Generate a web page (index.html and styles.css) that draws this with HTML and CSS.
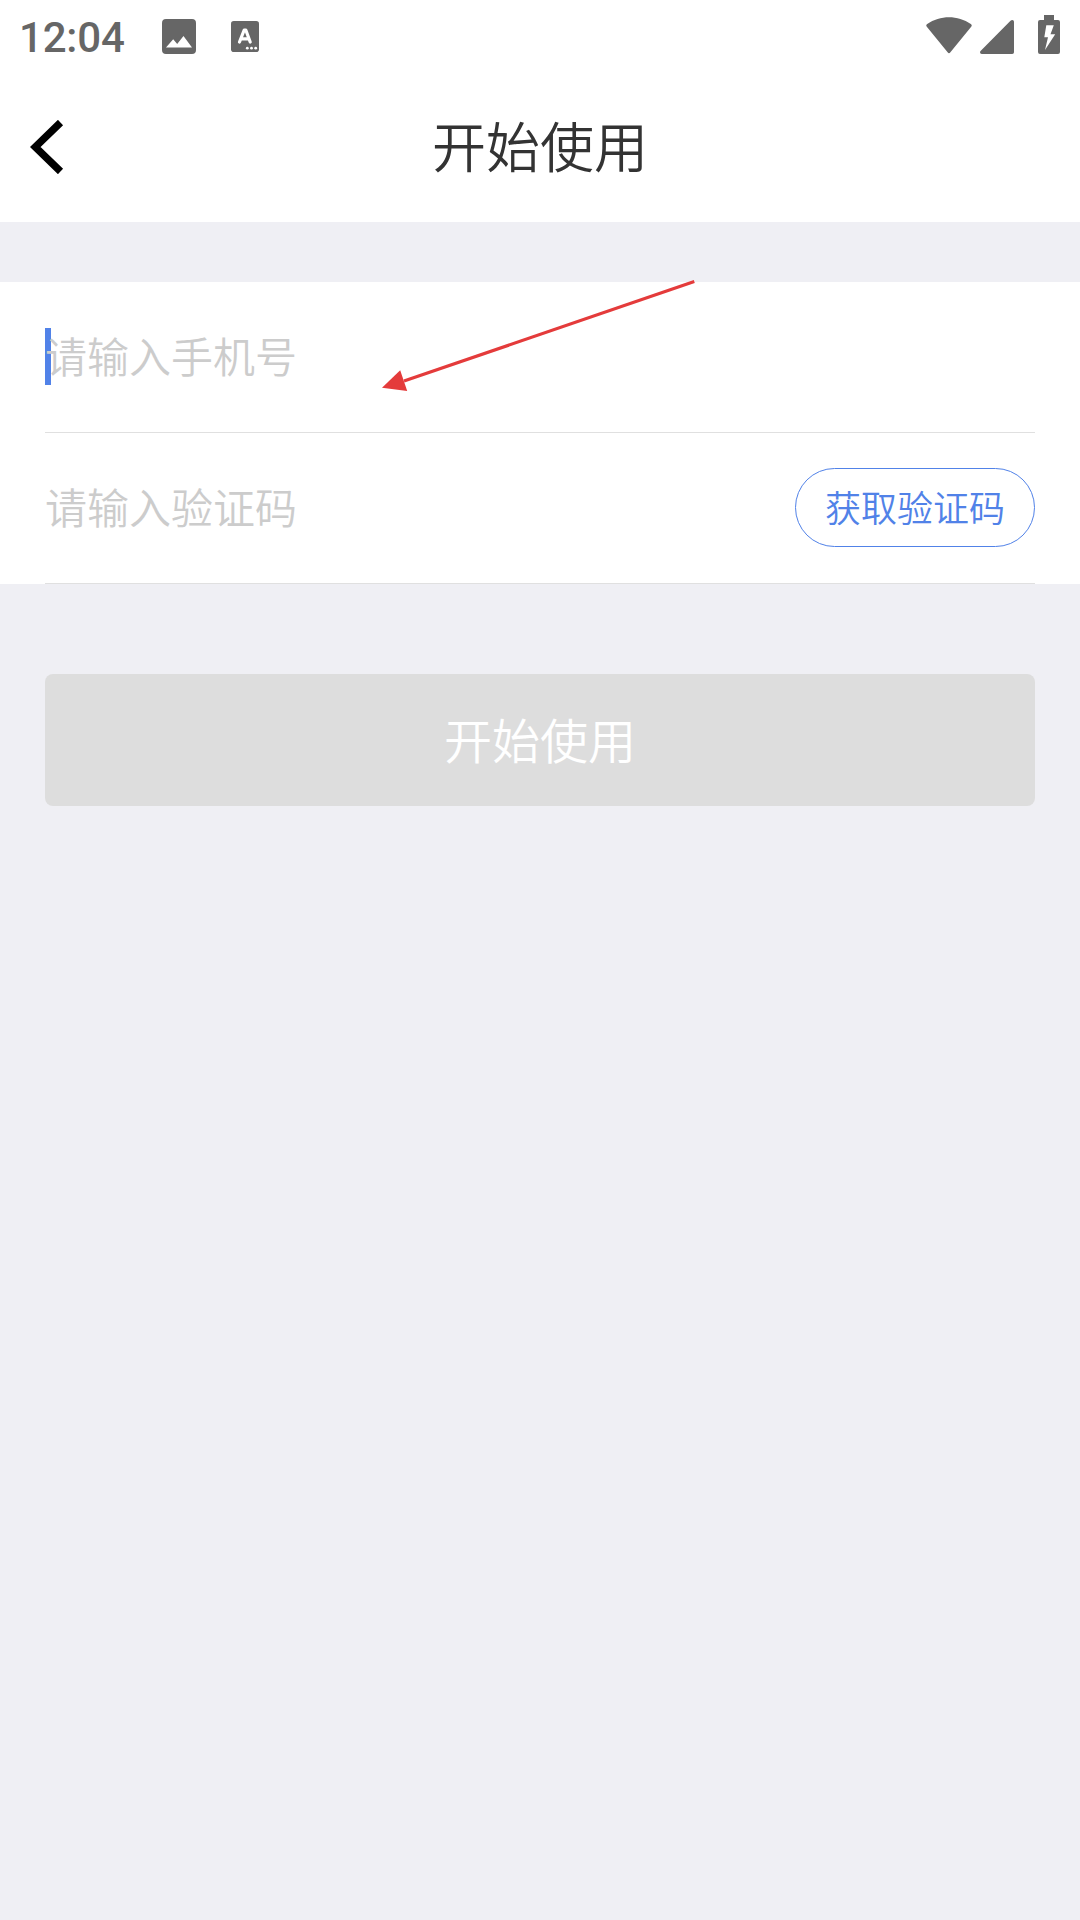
FILE: index.html
```html
<!DOCTYPE html>
<html lang="zh-CN">
<head>
<meta charset="utf-8">
<title>开始使用</title>
<link rel="stylesheet" href="styles.css">
</head>
<body>
<div class="status-bar">
  <span class="time">12:04</span>
  <svg class="icon-image" width="34" height="35" viewBox="0 0 34 35"><path fill="#666" fill-rule="evenodd" d="M4 0H30Q34 0 34 4V31Q34 35 30 35H4Q0 35 0 31V4Q0 0 4 0ZM4 28.5H30L21.500 17L15.200 25L11.200 20.300Z"/></svg>
  <svg class="icon-letter" width="28" height="31" viewBox="0 0 28 31"><rect width="28" height="31" rx="2.800" fill="#666"/><path d="M8.500 21L13.200 9H14.800L19.200 21M10 17.800H17.800" fill="none" stroke="#fff" stroke-width="3.200" stroke-linecap="round" stroke-linejoin="round"/><g fill="#fff"><circle cx="16.300" cy="27.200" r="1.400"/><circle cx="20.500" cy="27.200" r="1.400"/><circle cx="24.700" cy="27.200" r="1.400"/></g></svg>
  <div class="system-icons">
    <svg width="46" height="37" viewBox="0 0 46 37" fill="#666"><path d="M.8 9.800Q-.5 8.300 1.200 7.100C14-1.900 32-1.900 44.800 7.100Q46.500 8.300 45.200 9.800L24.400 35.300Q23 37 21.600 35.300Z"/></svg>
    <svg class="icon-signal" width="34" height="34" viewBox="0 0 34 34" fill="#666"><path d="M30.500 .8Q31.300 0 32.300 0Q34 0 34 1.800V32.200Q34 34 32.200 34H1.800Q0 34 0 32.300Q0 31.500 .8 30.700Z"/></svg>
    <svg class="icon-battery" width="22" height="39" viewBox="0 0 22 39"><path fill="#666" fill-rule="evenodd" d="M6 0H16V5H20Q22 5 22 7V37Q22 39 20 39H2Q0 39 0 37V7Q0 5 2 5H6ZM8.300 10.300L6.300 22.300H10L7 35L17.200 19.200H12.500L15.800 10.300Z"/></svg>
  </div>
</div>
<header class="header">
  <svg class="back" width="34" height="54" viewBox="0 0 34 54"><path d="M30.500 2.500L5.200 27L30.500 51.500" fill="none" stroke="#000" stroke-width="7.400"/></svg>
  <h1 class="title">开始使用</h1>
</header>
<main class="content">
  <form class="form">
    <div class="row"><span class="caret"></span><span class="placeholder">请输入手机号</span></div>
    <div class="row"><span class="placeholder">请输入验证码</span><button type="button" class="code-button">获取验证码</button></div>
    <svg class="arrow" width="314" height="112" viewBox="0 0 314 112"><path d="M312.300 1.600L22 101" stroke="#e43b3b" stroke-width="3.200"/><path d="M0 107.700L18.200 90.300L25.200 111Z" fill="#e43b3b"/></svg>
  </form>
  <button type="button" class="submit">开始使用</button>
</main>
</body>
</html>
```
FILE: styles.css
```css
* {
  box-sizing: border-box;
}

body {
  margin: 0;
  min-height: 1920px;
  background: #efeff4;
  font-family: "Noto Sans CJK SC DemiLight", "Noto Sans CJK SC", sans-serif;
  font-weight: 350;
}

button {
  padding: 0;
  font-family: inherit;
  font-weight: inherit;
}

.status-bar {
  display: flex;
  height: 72px;
  padding: 0 20px 0 19px;
  background: #fff;
}

.time {
  width: 143px;
  padding-top: 13px;
  font: 500 42px/50px Roboto, sans-serif;
  letter-spacing: -0.2px;
  color: #666;
}

.icon-image {
  margin-top: 19px;
}

.icon-letter {
  margin: 20.500px 0 0 35px;
}

.system-icons {
  display: flex;
  align-items: flex-start;
  margin-left: auto;
  padding-top: 15px;
}

.system-icons svg:first-child {
  margin-top: 2px;
}

.icon-signal {
  margin: 5px 24px 0 8px;
}

.header {
  display: grid;
  grid-template-columns: 1fr auto 1fr;
  align-items: center;
  height: 150px;
  padding: 0 30px;
  background: #fff;
}

.title {
  margin: 0;
  padding-bottom: 4px;
  font-size: 54px;
  font-weight: inherit;
  line-height: 80px;
  color: #333;
}

.form {
  position: relative;
  margin-top: 60px;
  padding: 0 45px;
  background: #fff;
}

.row {
  display: flex;
  align-items: center;
  height: 151px;
  padding-bottom: 2px;
  border-bottom: 1px solid #e0e0e0;
}

.caret {
  width: 6px;
  height: 57px;
  margin-right: -6px;
  background: #5182e8;
}

.placeholder {
  position: relative;
  padding-bottom: 2px;
  font-size: 42px;
  line-height: 60px;
  color: #ccc;
}

.code-button {
  width: 240px;
  height: 79px;
  margin-left: auto;
  padding-bottom: 2px;
  border: 1px solid #5182e8;
  border-radius: 40px;
  background: #fff;
  font-size: 36px;
  color: #5182e8;
}

.arrow {
  position: absolute;
  top: -2px;
  left: 382px;
}

.submit {
  display: block;
  width: 990px;
  height: 132px;
  margin: 90px auto 0;
  padding-bottom: 5px;
  border: 0;
  border-radius: 8px;
  background: #ddd;
  font-size: 48px;
  color: #fff;
}
```
